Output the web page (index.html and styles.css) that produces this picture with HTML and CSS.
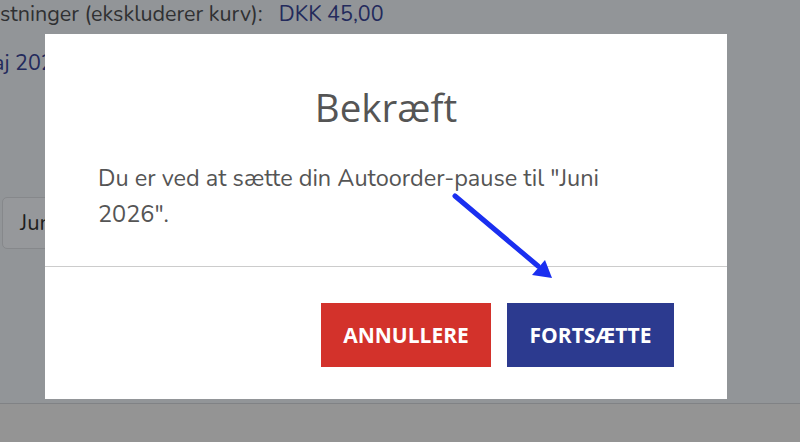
FILE: index.html
```html
<!DOCTYPE html>
<html lang="da">
<head>
<meta charset="utf-8">
<title>Bekræft</title>
<link rel="stylesheet" href="styles.css">
</head>
<body>
<div class="page">
  <div class="summary-row">
    <span class="summary-label">stninger (ekskluderer kurv):</span>
    <span class="summary-value">DKK 45,00</span>
  </div>
  <div class="date-row">aj 2026</div>
  <div class="select-box">Juni</div>
</div>
<div class="bottom-bar"></div>
<div class="overlay">
  <div class="modal">
    <div class="modal-body">
      <h2 class="modal-title">Bekræft</h2>
      <p class="modal-text">Du er ved at sætte din Autoorder-pause til "Juni 2026".</p>
    </div>
    <div class="modal-footer">
      <button class="btn btn-cancel">ANNULLERE</button>
      <button class="btn btn-continue">FORTSÆTTE</button>
    </div>
  </div>
</div>
<svg class="annotation" width="800" height="442" viewBox="0 0 800 442">
  <line x1="455" y1="196" x2="538" y2="266" stroke="#1a2ff0" stroke-width="5" stroke-linecap="round"/>
  <polygon points="552,278 532,275 545,260" fill="#1a2ff0"/>
</svg>
</body>
</html>
```
FILE: styles.css
```css
html, body {
  margin: 0;
  padding: 0;
}
body {
  width: 800px;
  height: 442px;
  overflow: hidden;
  background: #929598;
  font-family: "Nunito", "Lato", "Noto Sans", sans-serif;
  position: relative;
}
.page {
  display: flex;
  flex-direction: column;
  height: 403px;
}
.summary-row {
  display: flex;
  gap: 16px;
  font-size: 21.5px;
  line-height: 28px;
}
.summary-label { color: #2f3032; }
.summary-value { color: #232a5c; }
.date-row {
  color: #232a5c;
  font-size: 21.5px;
  line-height: 28px;
  margin-top: 21px;
  margin-left: -7px;
}
.select-box {
  margin-top: 120px;
  margin-left: 2px;
  width: 120px;
  height: 52px;
  border: 1px solid #86888b;
  border-radius: 5px;
  background: #96989b;
  color: #1e1f20;
  font-size: 22px;
  line-height: 50px;
  padding-left: 17px;
  box-sizing: border-box;
}
.bottom-bar {
  height: 39px;
  background: #949494;
  border-top: 1px solid #808285;
  box-sizing: border-box;
}
.overlay {
  position: absolute;
  inset: 0;
  padding: 34px 0 0 45px;
}
.modal {
  width: 682px;
  height: 365px;
  background: #fff;
  display: flex;
  flex-direction: column;
}
.modal-body {
  padding: 0 53px;
  height: 233px;
  border-bottom: 1px solid #cccccc;
  box-sizing: border-box;
}
.modal-title {
  margin: 49px 0 0;
  text-align: center;
  font-family: "Open Sans", "Noto Sans", sans-serif;
  font-weight: 400;
  font-size: 38.5px;
  line-height: 48px;
  color: #555555;
}
.modal-text {
  margin: 29px 0 0;
  max-width: 540px;
  font-size: 23.5px;
  line-height: 36px;
  color: #555555;
}
.modal-footer {
  display: flex;
  justify-content: flex-end;
  gap: 16px;
  padding: 36px 53px 0 0;
}
.btn {
  border: none;
  width: 170px;
  height: 64px;
  color: #fff;
  font-family: "Open Sans", "Noto Sans", sans-serif;
  font-weight: 700;
  font-size: 21px;
  padding: 0;
}
.btn-cancel { background: #d3322b; }
.btn-continue { background: #2c3a8f; width: 167px; }
.annotation {
  position: absolute;
  left: 0;
  top: 0;
}
```
